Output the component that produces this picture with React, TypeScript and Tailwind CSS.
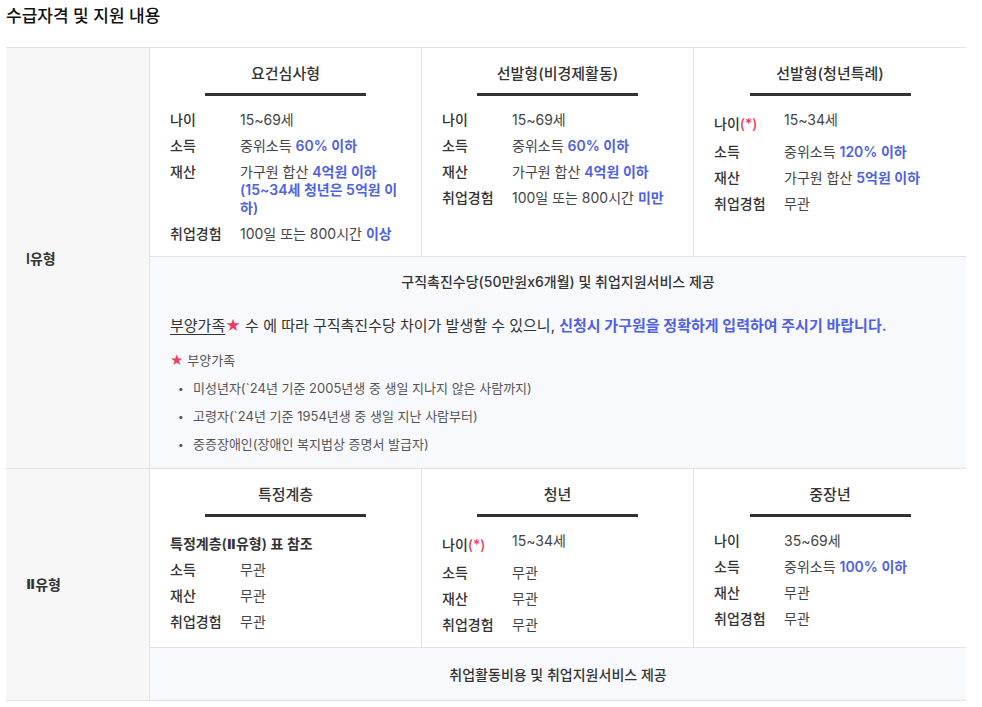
import React from 'react';

/* ---------- Typen ---------- */

type Row = {
  label: React.ReactNode;
  value?: React.ReactNode;
  full?: boolean;
};

type Column = {
  title: string;
  rows: Row[];
};

/* ---------- Hilfs-Komponenten ---------- */

const Blue = ({ children }: { children: React.ReactNode }) => (
  <span className="align-top font-semibold text-[#4f5fe6]">{children}</span>
);

const Star = () => <span className="text-[#f03a5f]">★</span>;

/** Römische Ziffer mit Querbalken wie im Original. */
const Roman = ({ children }: { children: React.ReactNode }) => (
  <span style={{ fontFamily: '"DejaVu Sans", sans-serif' }}>{children}</span>
);

const AgeStar = () => (
  <span className="inline-block pt-[4px] pb-[2px] align-top">
    나이<span className="text-[#f03a5f]">(*)</span>
  </span>
);

function InfoColumn({ col, first }: { col: Column; first?: boolean }) {
  return (
    <div className={'px-5 pt-4 pb-[13px] ' + (first ? '' : 'border-l border-[#e1e1e1]')}>
      <h3 className="text-center text-[15px] leading-[20px] font-medium text-[#333]">{col.title}</h3>
      <div className="mx-auto mt-[9px] h-[3px] w-[161px] bg-[#333]" />
      <div className="mt-[15px] flex flex-col gap-2 text-[14px] leading-[18px]">
        {col.rows.map((r, i) =>
          r.full ? (
            <div key={i} className="pt-[3px] font-semibold text-[#333]">
              {r.label}
            </div>
          ) : (
            <div key={i} className="flex">
              <div className="w-[70px] shrink-0 font-medium text-[#333]">{r.label}</div>
              <div className="min-w-0 flex-1 text-[#444]">{r.value}</div>
            </div>
          )
        )}
      </div>
    </div>
  );
}

/* ---------- Daten ---------- */

const typeOne: Column[] = [
  {
    title: '요건심사형',
    rows: [
      { label: '나이', value: '15~69세' },
      { label: '소득', value: <>중위소득 <Blue>60% 이하</Blue></> },
      {
        label: '재산',
        value: (
          <>
            가구원 합산 <Blue>4억원 이하</Blue> <Blue>(15~34세 청년은 5억원 이하)</Blue>
          </>
        ),
      },
      { label: '취업경험', value: <>100일 또는 800시간 <Blue>이상</Blue></> },
    ],
  },
  {
    title: '선발형(비경제활동)',
    rows: [
      { label: '나이', value: '15~69세' },
      { label: '소득', value: <>중위소득 <Blue>60% 이하</Blue></> },
      { label: '재산', value: <>가구원 합산 <Blue>4억원 이하</Blue></> },
      { label: '취업경험', value: <>100일 또는 800시간 <Blue>미만</Blue></> },
    ],
  },
  {
    title: '선발형(청년특례)',
    rows: [
      { label: <AgeStar />, value: '15~34세' },
      { label: '소득', value: <>중위소득 <Blue>120% 이하</Blue></> },
      { label: '재산', value: <>가구원 합산 <Blue>5억원 이하</Blue></> },
      { label: '취업경험', value: '무관' },
    ],
  },
];

const typeTwo: Column[] = [
  {
    title: '특정계층',
    rows: [
      { label: <>특정계층(<Roman>Ⅱ</Roman>유형) 표 참조</>, full: true },
      { label: '소득', value: '무관' },
      { label: '재산', value: '무관' },
      { label: '취업경험', value: '무관' },
    ],
  },
  {
    title: '청년',
    rows: [
      { label: <AgeStar />, value: '15~34세' },
      { label: '소득', value: '무관' },
      { label: '재산', value: '무관' },
      { label: '취업경험', value: '무관' },
    ],
  },
  {
    title: '중장년',
    rows: [
      { label: '나이', value: '35~69세' },
      { label: '소득', value: <>중위소득 <Blue>100% 이하</Blue></> },
      { label: '재산', value: '무관' },
      { label: '취업경험', value: '무관' },
    ],
  },
];

const dependents = [
  '미성년자(`24년 기준 2005년생 중 생일 지나지 않은 사람까지)',
  '고령자(`24년 기준 1954년생 중 생일 지난 사람부터)',
  '중증장애인(장애인 복지법상 증명서 발급자)',
];

/* ---------- Haupt-Komponente ---------- */

export default function App() {
  return (
    <div
      className="h-[707px] w-[982px] overflow-hidden bg-white text-[#222]"
      style={{ fontFamily: 'Inter, "Noto Sans CJK KR", sans-serif' }}
    >
      <h2 className="pl-[6px] pt-[5px] text-[17px] leading-[22px] font-medium text-[#111]">
        수급자격 및 지원 내용
      </h2>

      <div className="mx-[6px] mt-[20px] w-[960px] border-b border-[#e1e1e1]">
        {/* Ⅰ유형 */}
        <div className="grid grid-cols-[144px_1fr] border-t border-[#e1e1e1]">
          <div className="flex items-center border-r border-[#e1e1e1] bg-[#f7f7f7] pl-5 text-[14px] font-semibold text-[#333]">
            Ⅰ유형
          </div>
          <div>
            <div className="grid grid-cols-[271px_272px_1fr]">
              {typeOne.map((c, i) => (
                <InfoColumn key={c.title} col={c} first={i === 0} />
              ))}
            </div>
            <div className="border-t border-[#e1e1e1] bg-[#f8f9fd] px-5 pt-[15px] pb-[14px]">
              <p className="text-center text-[14px] leading-[20px] font-medium text-[#333]">
                구직촉진수당(50만원x6개월) 및 취업지원서비스 제공
              </p>
              <p className="mt-[23px] text-[15px] leading-[22px] text-[#333]">
                <span className="underline underline-offset-[3px]">부양가족</span>
                <Star /> 수 에 따라 구직촉진수당 차이가 발생할 수 있으니,{' '}
                <span className="font-semibold text-[#4f5fe6]">
                  신청시 가구원을 정확하게 입력하여 주시기 바랍니다.
                </span>
              </p>
              <p className="mt-[13px] text-[13px] leading-[20px] text-[#555]">
                <Star /> 부양가족
              </p>
              <ul className="mt-2 flex flex-col gap-2 text-[13px] leading-[20px] text-[#555]">
                {dependents.map((d) => (
                  <li key={d} className="flex pl-[8px]">
                    <span className="w-[15px] shrink-0 text-[10px]">•</span>
                    {d}
                  </li>
                ))}
              </ul>
            </div>
          </div>
        </div>

        {/* Ⅱ유형 */}
        <div className="grid grid-cols-[144px_1fr] border-t border-[#e1e1e1]">
          <div className="flex items-center border-r border-[#e1e1e1] bg-[#f7f7f7] pl-5 text-[14px] font-semibold text-[#333]">
            <Roman>Ⅱ</Roman>유형
          </div>
          <div>
            <div className="grid grid-cols-[271px_272px_1fr]">
              {typeTwo.map((c, i) => (
                <InfoColumn key={c.title} col={c} first={i === 0} />
              ))}
            </div>
            <div className="flex h-[53px] items-center justify-center border-t border-[#e1e1e1] bg-[#f8f9fd] text-[14px] font-medium text-[#333]">
              취업활동비용 및 취업지원서비스 제공
            </div>
          </div>
        </div>
      </div>
    </div>
  );
}
